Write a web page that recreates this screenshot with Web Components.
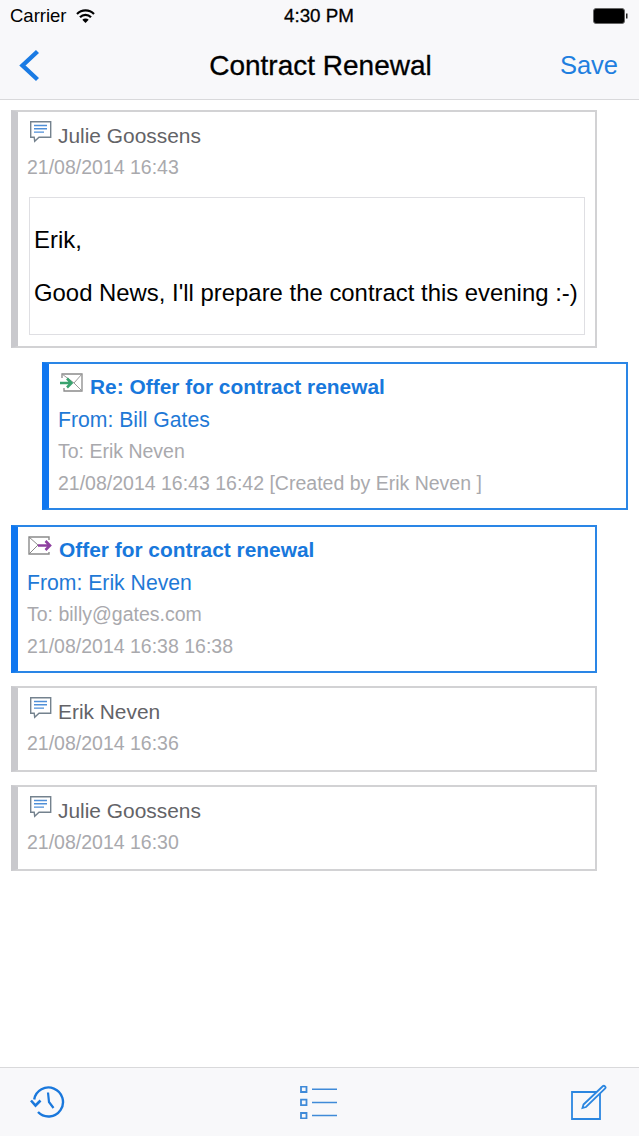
<!DOCTYPE html>
<html>
<head>
<meta charset="utf-8">
<title>Contract Renewal</title>
<style>
  html, body { margin: 0; padding: 0; background: #fff; }
  body { font-family: "Liberation Sans", Arial, sans-serif; }
</style>
</head>
<body>
<thread-app>
  <status-bar slot="status"></status-bar>
  <nav-bar slot="nav" title="Contract Renewal" action="Save"></nav-bar>

  <thread-card variant="note" style="--top: 0px">
    <msg-row kind="name" icon="chat">Julie Goossens</msg-row>
    <msg-row kind="meta">21/08/2014 16:43</msg-row>
    <message-body>
      <p>Erik,</p>
      <p>Good News, I'll prepare the contract this evening :-)</p>
    </message-body>
  </thread-card>

  <thread-card variant="mail" indent style="--top: 14px">
    <msg-row kind="subject" icon="in">Re: Offer for contract renewal</msg-row>
    <msg-row kind="from">From: Bill Gates</msg-row>
    <msg-row kind="meta">To: Erik Neven</msg-row>
    <msg-row kind="meta">21/08/2014 16:43 16:42 [Created by Erik Neven ]</msg-row>
  </thread-card>

  <thread-card variant="mail" style="--top: 15px">
    <msg-row kind="subject" icon="out">Offer for contract renewal</msg-row>
    <msg-row kind="from">From: Erik Neven</msg-row>
    <msg-row kind="meta">To: billy@gates.com</msg-row>
    <msg-row kind="meta">21/08/2014 16:38 16:38</msg-row>
  </thread-card>

  <thread-card variant="note">
    <msg-row kind="name" icon="chat">Erik Neven</msg-row>
    <msg-row kind="meta">21/08/2014 16:36</msg-row>
  </thread-card>

  <thread-card variant="note">
    <msg-row kind="name" icon="chat">Julie Goossens</msg-row>
    <msg-row kind="meta">21/08/2014 16:30</msg-row>
  </thread-card>

  <tool-bar slot="tools"></tool-bar>
</thread-app>

<script>
(function () {
    const ICONS = {
        chat: `
      <svg width="24" height="23" viewBox="0 0 24 23" fill="none">
        <path d="M2.700 1.700h20v15.500H11l-4.300 4-.5-4H2.700z" fill="#fff" stroke="#74828e" stroke-width="1.400"/>
        <path d="M6 5.500h13M6 8.800h13M6 12.100h10" stroke="#4f8fd8" stroke-width="1.400"/>
      </svg>`,
        in: `
      <svg width="24" height="20" viewBox="0 0 24 20" fill="none">
        <path d="M3 5V1h20v17H5v-3" stroke="#8a8a8a" stroke-width="1.300"/>
        <path d="M3 1l12 9 8-9M23 18l-8-8" stroke="#9a9a9a" stroke-width="1"/>
        <path d="M1 10h11M8 5.500l4.500 4.500-4.500 4.500" stroke="#3aa36f" stroke-width="2.600"/>
      </svg>`,
        out: `
      <svg width="24" height="20" viewBox="0 0 24 20" fill="none">
        <path d="M21 4V1H1v17h20v-2" stroke="#8a8a8a" stroke-width="1.400"/>
        <path d="M1 1l9 8-9 9" stroke="#8a8a8a" stroke-width="1"/>
        <path d="M10 9.500h12M17.500 5l4.500 4.500-4.500 4.500" stroke="#8e3fa0" stroke-width="2.600"/>
      </svg>`
    };

    class ThreadApp extends HTMLElement {
        constructor() {
            super();
            this.attachShadow({ mode: 'open' });
            this.shadowRoot.innerHTML = `
      <style>
        :host {
          display: flex;
          flex-direction: column;
          height: 1136px;
          overflow: hidden;
          background: #fff;
        }
        header {
          background: #f8f8fa;
          border-bottom: 1px solid #d9d9db;
        }
        main {
          flex: 1;
          display: flex;
          flex-direction: column;
          padding: 10px 0 0 11px;
        }
      </style>
      <header>
        <slot name="status"></slot>
        <slot name="nav"></slot>
      </header>
      <main><slot></slot></main>
      <slot name="tools"></slot>
    `;
        }
    }

    class StatusBar extends HTMLElement {
        constructor() {
            super();
            this.attachShadow({ mode: 'open' });
            this.shadowRoot.innerHTML = `
      <style>
        :host {
          display: grid;
          grid-template-columns: 1fr auto 1fr;
          align-items: center;
          height: 32px;
          padding: 0 11px 0 10px;
          color: #000;
          font-size: 18.500px;
        }
        .left { display: flex; align-items: center; gap: 9px; }
        .time { font-size: 18.800px; -webkit-text-stroke: .3px #000; }
        .right { display: flex; justify-content: flex-end; }
      </style>
      <div class="left">
        <span>Carrier</span>
        <svg width="19" height="14" viewBox="0 0 19 14" fill="none" stroke="#000" stroke-width="2.200">
          <path d="M1 5a12 12 0 0 1 17 0M4 8.300a7.500 7.500 0 0 1 11 0"/>
          <path d="M9.500 14l-3.200-3.200a4.500 4.500 0 0 1 6.400 0z" fill="#000" stroke="none"/>
        </svg>
      </div>
      <span class="time">4:30 PM</span>
      <div class="right">
        <svg width="35" height="16" viewBox="0 0 35 16">
          <rect x=".5" y=".5" width="31" height="15" rx="2.500" fill="#000" stroke="#666"/>
          <path d="M33 5.500h1.500v5H33z" fill="#222"/>
        </svg>
      </div>
    `;
        }
    }

    class NavBar extends HTMLElement {
        constructor() {
            super();
            this.attachShadow({ mode: 'open' });
            this.shadowRoot.innerHTML = `
      <style>
        :host {
          display: grid;
          grid-template-columns: 1fr auto 1fr;
          align-items: center;
          height: 67px;
          padding: 0 20px 0 22px;
        }
        .title {
          font-size: 28px;
          color: #000;
          -webkit-text-stroke: .3px #000;
        }
        .action {
          justify-self: end;
          margin-right: 1px;
          font-size: 25.500px;
          color: #1f7fdf;
        }
        svg { display: block; margin-left: -3px; }
      </style>
      <svg width="21" height="33" viewBox="0 0 21 33" fill="none" stroke="#1a7be4" stroke-width="4.400">
        <path d="M18.500 2.500L3.500 16.500l15 14"/>
      </svg>
      <span class="title"></span>
      <span class="action"></span>
    `;
        }

        connectedCallback() {
            this.shadowRoot.querySelector('.title').textContent = this.getAttribute('title');
            this.shadowRoot.querySelector('.action').textContent = this.getAttribute('action');
        }
    }

    class ThreadCard extends HTMLElement {
        constructor() {
            super();
            this.attachShadow({ mode: 'open' });
            this.shadowRoot.innerHTML = `
      <style>
        :host {
          display: block;
          box-sizing: border-box;
          width: 586px;
          margin-top: var(--top, 13px);
          padding: 7px 10px 11px 9px;
          border: 2px solid #d2d2d4;
          border-left-width: 7px;
          border-left-color: #c9c9cd;
          background: #fff;
        }
        :host([variant="mail"]) {
          padding-bottom: 9px;
          border: 2px solid #2a86e6;
          border-left: 7px solid #1077f0;
        }
        :host([indent]) { margin-left: 31px; }
        .rows { display: flex; flex-direction: column; }
      </style>
      <div class="rows"><slot></slot></div>
    `;
        }
    }

    class MsgRow extends HTMLElement {
        constructor() {
            super();
            this.attachShadow({ mode: 'open' });
            this.shadowRoot.innerHTML = `
      <style>
        :host {
          display: flex;
          align-items: center;
          box-sizing: border-box;
          height: 32px;
          white-space: nowrap;
          font-size: 19.500px;
          color: #a9a9ad;
        }
        :host([kind="name"]) { padding-top: 1px; font-size: 20.900px; color: #636367; }
        :host([kind="from"]) { padding-top: 2px; font-size: 21.200px; color: #1f79d6; }
        :host([kind="subject"]) { font-size: 20.900px; color: #1878dc; font-weight: bold; }
        .icon { display: none; margin: -8px 6px 0 1px; }
        :host([kind="subject"]) .icon { margin-right: 7px; }
        .icon.on { display: block; }
        svg { display: block; }
      </style>
      <span class="icon"></span>
      <slot></slot>
    `;
        }

        connectedCallback() {
            const name = this.getAttribute('icon');
            if (name) {
                const icon = this.shadowRoot.querySelector('.icon');
                icon.innerHTML = ICONS[name];
                icon.classList.add('on');
            }
        }
    }

    class MessageBody extends HTMLElement {
        constructor() {
            super();
            this.attachShadow({ mode: 'open' });
            this.shadowRoot.innerHTML = `
      <style>
        :host {
          display: block;
          box-sizing: border-box;
          height: 138px;
          margin: 14px 0 0 2px;
          padding: 15px 4px;
          border: 1px solid #dfdfe3;
          font-size: 23.900px;
          line-height: 53px;
          color: #000;
          white-space: nowrap;
        }
        ::slotted(p) { margin: 0; }
      </style>
      <slot></slot>
    `;
        }
    }

    class ToolBar extends HTMLElement {
        constructor() {
            super();
            this.attachShadow({ mode: 'open' });
            this.shadowRoot.innerHTML = `
      <style>
        :host {
          display: flex;
          justify-content: space-between;
          align-items: center;
          box-sizing: border-box;
          height: 69px;
          padding: 0 32px 0 30px;
          background: #f8f8fa;
          border-top: 1px solid #d9d9db;
        }
        svg { display: block; }
        .list { margin-right: 1px; }
      </style>
      <svg width="36" height="34" viewBox="0 0 36 34" fill="none" stroke="#1a78dc" stroke-width="2.400">
        <path d="M4.200 14.500a14.500 14.500 0 1 1 3.800 12.500"/>
        <path d="M1 15.500l4.500 5 5-5" stroke-width="2.600"/>
        <path d="M18 7.500l1 9.500 4.500 6" stroke-width="2.200"/>
      </svg>
      <svg class="list" width="37" height="33" viewBox="0 0 37 33" fill="none" stroke="#3f8ad8">
        <path d="M1 .5h5.500V6H1zM1 13.700h5.500v5.500H1zM1 27h5.500v5.500H1z" stroke-width="1.800"/>
        <path d="M12 3.200h25M12 16.400h25M12 29.600h25" stroke-width="1.500"/>
      </svg>
      <svg width="36" height="36" viewBox="0 0 36 36" fill="none" stroke="#2b86e0" stroke-width="1.800">
        <path d="M1 8h28v27H1z"/>
        <path d="M12.500 20.500L32 2c1.200-1 3.400 1.200 2.200 2.400L15 23l-3.500 1z" fill="#f8f8fa"/>
      </svg>
    `;
        }
    }

    customElements.define('thread-app', ThreadApp);
    customElements.define('status-bar', StatusBar);
    customElements.define('nav-bar', NavBar);
    customElements.define('thread-card', ThreadCard);
    customElements.define('msg-row', MsgRow);
    customElements.define('message-body', MessageBody);
    customElements.define('tool-bar', ToolBar);
})();
</script>
</body>
</html>
